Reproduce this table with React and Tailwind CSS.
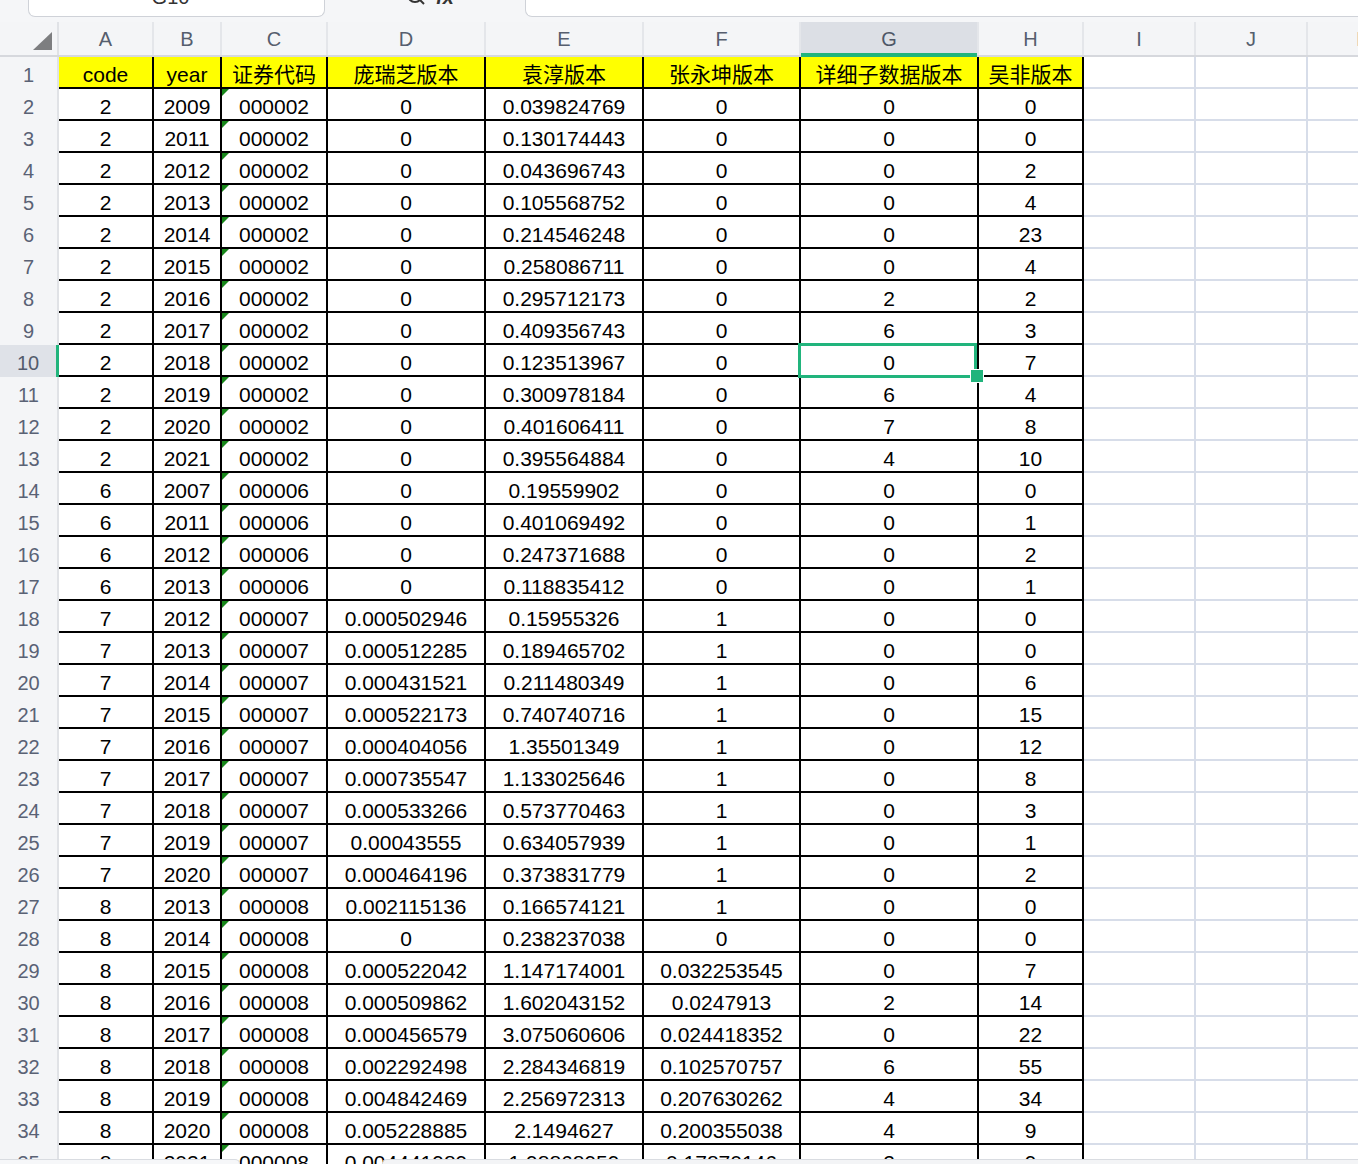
import React from "react";

const FONT = { fontFamily: '"Liberation Sans", "Noto Sans CJK SC", Arial, sans-serif' };

// column widths (px incl. the 2px right border)
const dataCols = ["w-[95px]", "w-[68px]", "w-[106px]", "w-[158px]", "w-[158px]", "w-[157px]", "w-[178px]", "w-[105px]"];
const emptyCols = ["w-[112px]", "w-[112px]", "w-[112px]"];
const letters = ["A", "B", "C", "D", "E", "F", "G", "H", "I", "J", "K"];

const headers = ["code", "year", "证券代码", "庞瑞芝版本", "袁淳版本", "张永坤版本", "详细子数据版本", "吴非版本"];

const rows = [
  ["2", "2009", "000002", "0", "0.039824769", "0", "0", "0"],
  ["2", "2011", "000002", "0", "0.130174443", "0", "0", "0"],
  ["2", "2012", "000002", "0", "0.043696743", "0", "0", "2"],
  ["2", "2013", "000002", "0", "0.105568752", "0", "0", "4"],
  ["2", "2014", "000002", "0", "0.214546248", "0", "0", "23"],
  ["2", "2015", "000002", "0", "0.258086711", "0", "0", "4"],
  ["2", "2016", "000002", "0", "0.295712173", "0", "2", "2"],
  ["2", "2017", "000002", "0", "0.409356743", "0", "6", "3"],
  ["2", "2018", "000002", "0", "0.123513967", "0", "0", "7"],
  ["2", "2019", "000002", "0", "0.300978184", "0", "6", "4"],
  ["2", "2020", "000002", "0", "0.401606411", "0", "7", "8"],
  ["2", "2021", "000002", "0", "0.395564884", "0", "4", "10"],
  ["6", "2007", "000006", "0", "0.19559902", "0", "0", "0"],
  ["6", "2011", "000006", "0", "0.401069492", "0", "0", "1"],
  ["6", "2012", "000006", "0", "0.247371688", "0", "0", "2"],
  ["6", "2013", "000006", "0", "0.118835412", "0", "0", "1"],
  ["7", "2012", "000007", "0.000502946", "0.15955326", "1", "0", "0"],
  ["7", "2013", "000007", "0.000512285", "0.189465702", "1", "0", "0"],
  ["7", "2014", "000007", "0.000431521", "0.211480349", "1", "0", "6"],
  ["7", "2015", "000007", "0.000522173", "0.740740716", "1", "0", "15"],
  ["7", "2016", "000007", "0.000404056", "1.35501349", "1", "0", "12"],
  ["7", "2017", "000007", "0.000735547", "1.133025646", "1", "0", "8"],
  ["7", "2018", "000007", "0.000533266", "0.573770463", "1", "0", "3"],
  ["7", "2019", "000007", "0.00043555", "0.634057939", "1", "0", "1"],
  ["7", "2020", "000007", "0.000464196", "0.373831779", "1", "0", "2"],
  ["8", "2013", "000008", "0.002115136", "0.166574121", "1", "0", "0"],
  ["8", "2014", "000008", "0", "0.238237038", "0", "0", "0"],
  ["8", "2015", "000008", "0.000522042", "1.147174001", "0.032253545", "0", "7"],
  ["8", "2016", "000008", "0.000509862", "1.602043152", "0.0247913", "2", "14"],
  ["8", "2017", "000008", "0.000456579", "3.075060606", "0.024418352", "0", "22"],
  ["8", "2018", "000008", "0.002292498", "2.284346819", "0.102570757", "6", "55"],
  ["8", "2019", "000008", "0.004842469", "2.256972313", "0.207630262", "4", "34"],
  ["8", "2020", "000008", "0.005228885", "2.1494627", "0.200355038", "4", "9"],
  ["8", "2021", "000008", "0.004441989", "1.98868959", "0.17870146", "2", "9"],
];

const TextFlag = () => (
  <svg className="absolute left-0 top-0" width="7" height="7" viewBox="0 0 7 7">
    <polygon points="0,0 7,0 0,7" fill="#17861a" />
  </svg>
);

function RowHead({ n }) {
  if (n === 10) {
    return (
      <div className="w-[59px] shrink-0 flex items-center justify-center pt-[4px] border-r-[3px] border-[#21b47c] bg-[#dfe2e8] text-[20px] text-[#535b6c]">
        {n}
      </div>
    );
  }
  return (
    <div className="w-[59px] shrink-0 flex items-center justify-center pt-[4px] border-r-2 border-[#e0e2e6] bg-[#f4f5f7] text-[20px] text-[#5a6275]">
      {n}
    </div>
  );
}

function DataRow({ n, values, header }) {
  return (
    <div className="flex h-[32px] shrink-0">
      <RowHead n={n} />
      {values.map((v, i) => (
        <div
          key={i}
          className={`${dataCols[i]} shrink-0 relative flex items-center justify-center border-r-2 border-b-2 border-black text-[21px] text-black ${header ? "bg-[#ffff00]" : "bg-white"}`}
        >
          {!header && i === 2 && <TextFlag />}
          <span className="leading-none pt-[5px]">{v}</span>
          {n === 10 && i === 6 && (
            <>
              <div className="absolute z-10 -left-[3px] -top-[2px] right-0 -bottom-[3px] border-[3px] border-[#21b47c]" />
              <div className="absolute z-20 -right-[7px] -bottom-[8px] w-[14px] h-[14px] bg-[#21b47c] border border-white" />
            </>
          )}
        </div>
      ))}
      {emptyCols.map((w, i) => (
        <div key={i} className={`${w} shrink-0 bg-white border-r-2 border-b-2 border-[#d7dde9]`} />
      ))}
    </div>
  );
}

export default function App() {
  return (
    <div className="relative w-[1358px] h-[1164px] overflow-hidden bg-white flex flex-col" style={FONT}>
      {/* formula bar, mostly scrolled off */}
      <div className="h-[22px] shrink-0 flex items-start bg-[#f5f6f8]">
        <div className="ml-[28px] w-[297px] h-[17px] overflow-hidden flex items-end justify-center bg-white border border-t-0 border-[#cfd2d8] rounded-b-[7px]">
          <span className="text-[20px] leading-[20px] mb-[9px] pr-[12px] text-[#333]">G10</span>
        </div>
        <div className="w-[200px] h-[17px] overflow-hidden flex items-end justify-center gap-[10px]">
          <svg className="mb-[11px] ml-[10px]" width="20" height="20" viewBox="0 0 20 20" fill="none" stroke="#333" strokeWidth="2">
            <circle cx="9" cy="9" r="7" />
            <path d="M14 14l4 4" />
          </svg>
          <span className="text-[20px] leading-[20px] mb-[10px] italic font-bold text-[#333]">fx</span>
        </div>
        <div className="flex-1 h-[17px] bg-white border border-t-0 border-r-0 border-[#cfd2d8] rounded-bl-[7px]" />
      </div>

      {/* column letters */}
      <div className="h-[35px] shrink-0 flex bg-[#f4f5f7] border-b-2 border-[#d6d8dd]">
        <div className="w-[59px] shrink-0 relative border-r-2 border-[#e0e2e6]">
          <svg className="absolute left-[33px] top-[10px]" width="19" height="18" viewBox="0 0 19 18">
            <polygon points="19,0 19,18 0,18" fill="#7d7e80" />
          </svg>
        </div>
        {[...dataCols, ...emptyCols].map((w, i) =>
          letters[i] === "G" ? (
            <div key={i} className={`${w} shrink-0 relative flex items-center justify-center bg-[#dcdfe5] border-r-2 border-[#e4e6ea] text-[20px] text-[#4f5767]`}>
              {letters[i]}
              <div className="absolute left-0 right-0 -bottom-[2px] h-[4px] bg-[#21b47c]" />
            </div>
          ) : (
            <div key={i} className={`${w} shrink-0 flex items-center justify-center border-r-2 border-[#e4e6ea] text-[20px] text-[#565e6e]`}>
              {letters[i]}
            </div>
          )
        )}
      </div>

      {/* sheet */}
      <div className="flex-1 overflow-hidden flex flex-col">
        <DataRow n={1} values={headers} header />
        {rows.map((r, i) => (
          <DataRow key={i} n={i + 2} values={r} />
        ))}
      </div>

      {/* bottom bar peeking in */}
      <div className="absolute left-0 right-0 bottom-0 h-[5px] flex">
        <div className="w-[240px] h-full bg-[#f6f7f9] border-t border-r border-[#d9dce1] rounded-tr-[6px]" />
        <div className="w-[142px]" />
        <div className="flex-1 h-full bg-[#f3f4f6] border-t border-l border-[#d9dce1] rounded-tl-[6px]" />
      </div>
    </div>
  );
}
